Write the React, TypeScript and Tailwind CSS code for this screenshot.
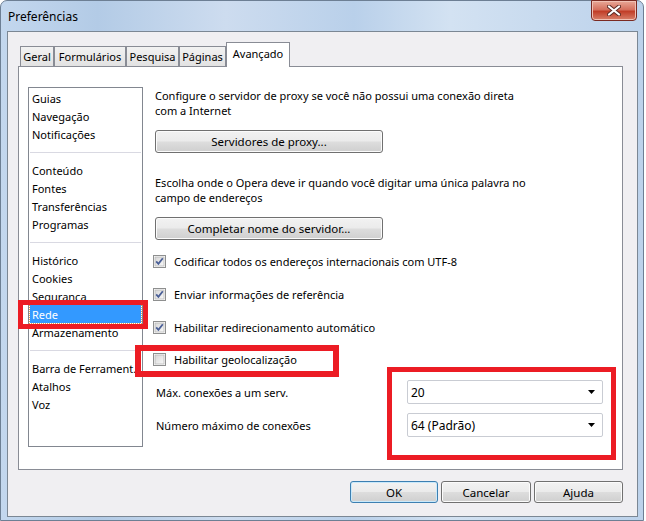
import React from "react";

const btnBg =
  "bg-[linear-gradient(to_bottom,#f2f2f2_0%,#ebebeb_48%,#dddddd_52%,#cfcfcf_100%)]";

function Button({ label, w, h, def }: { label: string; w: string; h: string; def?: boolean }) {
  return (
    <div
      className={`flex items-center justify-center rounded-[3px] border ${w} ${h} ${btnBg} ${
        def
          ? "border-[#3c7fb1] shadow-[inset_0_0_0_1px_#c9e9fb]"
          : "border-[#707070] shadow-[inset_0_0_0_1px_#fbfbfb]"
      } text-[11.5px] text-black`}
    >
      {label}
    </div>
  );
}

function Checkbox({ checked }: { checked?: boolean }) {
  return (
    <svg width="13" height="13" viewBox="0 0 13 13" className="shrink-0">
      <defs>
        <linearGradient id="cbg" x1="0" y1="0" x2="1" y2="1">
          <stop offset="0" stopColor="#d7d7d7" />
          <stop offset="1" stopColor="#f8f8f8" />
        </linearGradient>
      </defs>
      <rect x="0.5" y="0.5" width="12" height="12" fill="#ffffff" stroke="#8e8f8f" />
      <rect x="2" y="2" width="9" height="9" fill="url(#cbg)" stroke="#b9b9b9" strokeWidth="0.8" />
      {checked && (
        <path d="M3.2 6.4 L5.4 8.8 L9.8 3.2" fill="none" stroke="#4a5f97" strokeWidth="1.8" />
      )}
    </svg>
  );
}

function Select({ value }: { value: string }) {
  return (
    <div className="flex h-[24px] w-[196px] items-center justify-between rounded-[2px] border border-[#c9ccd3] bg-white pl-[3px] pr-[6px] text-[12px]">
      <span>{value}</span>
      <svg width="8" height="5" viewBox="0 0 8 5">
        <path d="M0 0 H7 L3.5 4 Z" fill="#000" />
      </svg>
    </div>
  );
}

const tabs = ["Geral", "Formulários", "Pesquisa", "Páginas", "Avançado"];
const tabW = ["w-[34px]", "w-[72px]", "w-[53px]", "w-[47px]", "w-[64px]"];

type Item = { t: string; sel?: boolean } | "sep";
const items: Item[] = [
  { t: "Guias" },
  { t: "Navegação" },
  { t: "Notificações" },
  "sep",
  { t: "Conteúdo" },
  { t: "Fontes" },
  { t: "Transferências" },
  { t: "Programas" },
  "sep",
  { t: "Histórico" },
  { t: "Cookies" },
  { t: "Segurança" },
  { t: "Rede", sel: true },
  { t: "Armazenamento" },
  "sep",
  { t: "Barra de Ferrament." },
  { t: "Atalhos" },
  { t: "Voz" },
];

export default function App() {
  return (
    <div className="relative h-[521px] w-[646px] overflow-hidden bg-white font-['Noto_Sans',sans-serif] text-[11px] leading-[15px] text-black">
      <div className="h-[521px] w-[644px] rounded-t-[7px] border border-[#6d7f94] bg-[linear-gradient(to_right,#c3d7ee_0%,#b3cbe6_15%,#cddcef_35%,#b9d0ea_55%,#d3e2f2_70%,#bcd2eb_100%)]">
        {/* title bar */}
        <div className="relative flex h-[30px] items-center pl-[7px] text-[12px]">
          <span>Preferências</span>
          <div className="absolute right-[6px] top-[-1px] flex h-[21px] w-[46px] items-center justify-center rounded-b-[4px] border border-[#7a2a22] bg-[linear-gradient(to_bottom,#e8a898_0%,#d5705e_45%,#c13e28_55%,#d8806a_100%)] shadow-[inset_0_0_0_1px_#f0c0b4]">
            <svg width="14" height="11" viewBox="0 0 14 11">
              <path
                d="M2 1.5 L12 9.5 M12 1.5 L2 9.5"
                stroke="#5a2a24"
                strokeWidth="4"
                strokeLinecap="round"
              />
              <path
                d="M2 1.5 L12 9.5 M12 1.5 L2 9.5"
                stroke="#ffffff"
                strokeWidth="2.2"
                strokeLinecap="round"
              />
            </svg>
          </div>
        </div>

        {/* client area */}
        <div className="ml-[6px] h-[486px] w-[631px] border border-[#7b8794] bg-[#f0eff2] pl-[10px] pt-[10px]">
          {/* tabs */}
          <div className="flex h-[24px] items-end pl-[2px]">
            {tabs.map((t, i) => {
              const sel = i === 4;
              return (
                <div
                  key={t}
                  className={`flex items-center justify-center border-x border-t border-[#898c95] text-[11px] ${tabW[i]} ${
                    sel
                      ? "relative z-10 mb-[-1px] h-[25px] bg-white pb-[3px] text-[11.5px]"
                      : "h-[20px] bg-[linear-gradient(to_bottom,#f2f2f2,#e2e2e2)]"
                  }`}
                >
                  {t}
                </div>
              );
            })}
          </div>

          {/* panel */}
          <div className="flex h-[404px] w-[605px] border border-[#898c95] bg-white">
            {/* list */}
            <div className="ml-[9px] mt-[20px] h-[360px] w-[115px] border border-[#828790] bg-white pt-[1px] text-[11px]">
              {items.map((it, i) =>
                it === "sep" ? (
                  <div key={i} className="flex h-[18px] items-center px-[1px]">
                    <div className="h-px w-full bg-[#d9d9e2]" />
                  </div>
                ) : (
                  <div
                    key={i}
                    className={`mx-[1px] flex h-[18px] items-center whitespace-nowrap pl-[2px] ${
                      it.sel ? "bg-[#3399ff] text-white outline outline-1 outline-dotted outline-[#e0a050]" : ""
                    }`}
                  >
                    {it.t}
                  </div>
                )
              )}
            </div>

            {/* right column */}
            <div className="ml-[12px] flex w-[448px] flex-col pt-[21px]">
              <p>
                Configure o servidor de proxy se você não possui uma conexão direta
                <br />
                com a Internet
              </p>
              <div className="mt-[12px]">
                <Button label="Servidores de proxy..." w="w-[228px]" h="h-[23px]" />
              </div>
              <p className="mt-[22px]">
                Escolha onde o Opera deve ir quando você digitar uma única palavra no
                <br />
                campo de endereços
              </p>
              <div className="mt-[12px]">
                <Button label="Completar nome do servidor..." w="w-[228px]" h="h-[23px]" />
              </div>

              <div className="-ml-[2px] mt-[11px] flex h-[20px] items-center gap-[8px]">
                <Checkbox checked />
                <span>Codificar todos os endereços internacionais com UTF-8</span>
              </div>
              <div className="-ml-[2px] mt-[13px] flex h-[20px] items-center gap-[8px]">
                <Checkbox checked />
                <span>Enviar informações de referência</span>
              </div>
              <div className="-ml-[2px] mt-[13px] flex h-[20px] items-center gap-[8px]">
                <Checkbox checked />
                <span>Habilitar redirecionamento automático</span>
              </div>
              <div className="-ml-[2px] mt-[12px] flex h-[20px] items-center gap-[8px]">
                <Checkbox />
                <span>Habilitar geolocalização</span>
              </div>

              <div className="mt-[11px] flex h-[24px] items-center justify-between pl-[1px]">
                <span>Máx. conexões a um serv.</span>
                <Select value="20" />
              </div>
              <div className="mt-[9px] flex h-[24px] items-center justify-between pl-[1px]">
                <span>Número máximo de conexões</span>
                <Select value="64 (Padrão)" />
              </div>
            </div>
          </div>

          {/* bottom buttons */}
          <div className="mt-[11px] flex w-[605px] justify-end gap-[3px]">
            <Button label="OK" w="w-[88px]" h="h-[22px]" def />
            <Button label="Cancelar" w="w-[90px]" h="h-[22px]" />
            <Button label="Ajuda" w="w-[89px]" h="h-[22px]" />
          </div>
        </div>
      </div>

      {/* red annotation boxes */}
      <div className="absolute left-[18px] top-[300px] h-[29px] w-[130px] border-[5px] border-[#ec1c24]" />
      <div className="absolute left-[135px] top-[345px] h-[32px] w-[204px] border-[6px] border-[#ec1c24]" />
      <div className="absolute left-[387px] top-[367px] h-[93px] w-[229px] border-[5px] border-[#ec1c24]" />
    </div>
  );
}
